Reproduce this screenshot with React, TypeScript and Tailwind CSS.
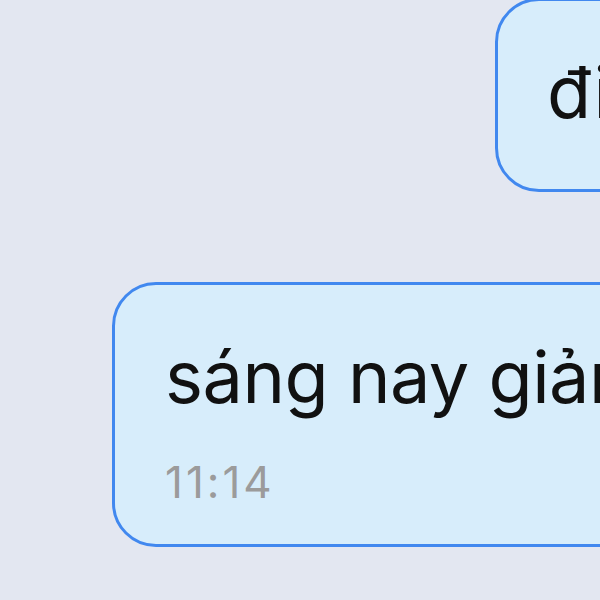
export default function App() {
  return (
    <div className="h-[600px] w-[600px] overflow-hidden bg-[#e3e7f1] font-['Inter','Noto_Sans',sans-serif]">
      <div className="-mt-0.5 flex pl-[495px]">
        <div className="shrink-0 whitespace-nowrap rounded-[44px] border-[3px] border-[#4188ef] bg-[#d7edfb] pb-[53px] pl-[49px] pr-[60px] pt-[47px]">
          <p className="text-[72px] leading-[88px] text-[#111111]">đi làm về muộn</p>
        </div>
      </div>

      <div className="mt-[90px] flex pl-[112px]">
        <div className="shrink-0 whitespace-nowrap rounded-[44px] border-[3px] border-[#4188ef] bg-[#d7edfb] pb-[36px] pl-[50px] pr-[60px] pt-[48px]">
          <p className="tracking-[-0.5px] text-[72px] leading-[88px] text-[#111111]">sáng nay giản dị</p>
          <p className="mt-[35px] text-[44px] leading-[52px] tracking-[3px] text-[#9b9b9b]">11:14</p>
        </div>
      </div>
    </div>
  );
}
